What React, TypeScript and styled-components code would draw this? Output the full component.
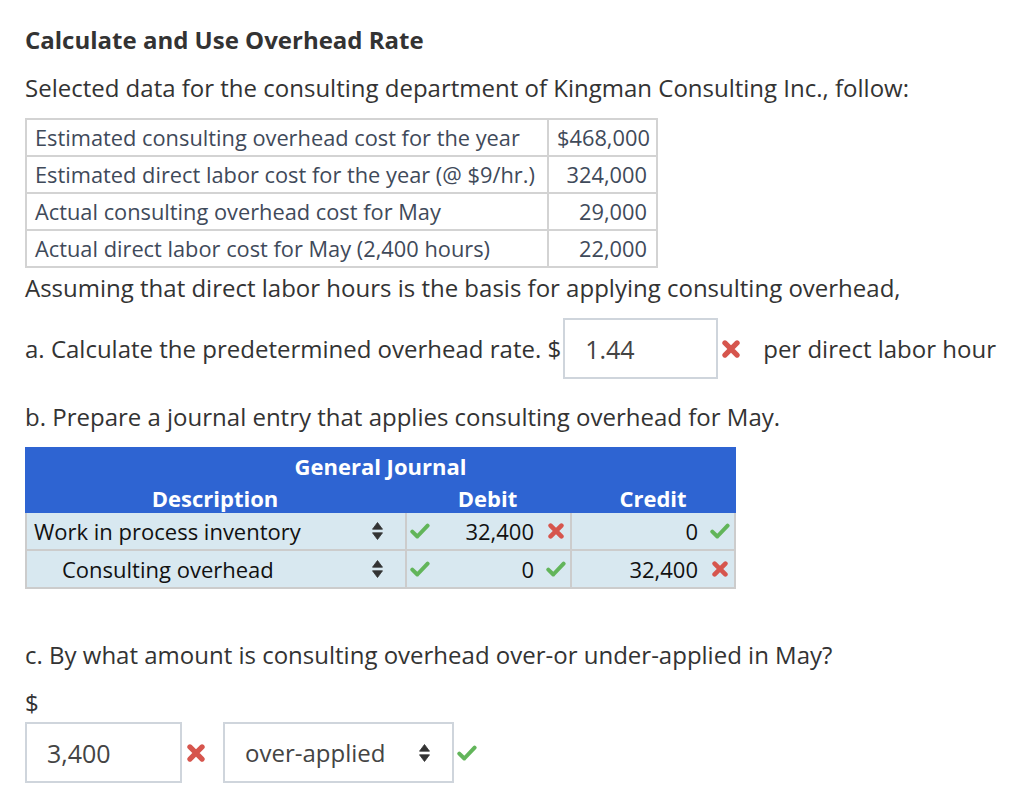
import React from 'react';
import styled, { createGlobalStyle } from 'styled-components';

const GlobalStyle = createGlobalStyle`
  body {
    margin: 0;
    background: #ffffff;
    font-family: "Open Sans", "Noto Sans", sans-serif;
    color: #333333;
  }
`;

const Page = styled.div`
  padding: 24px 0 40px 25px;
  width: 1000px;
`;

const Title = styled.h2`
  margin: 0;
  font-size: 24px;
  line-height: 32px;
  font-weight: 700;
  color: #333;
`;

const Para = styled.p<{ $top: number }>`
  margin: ${p => p.$top}px 0 0;
  font-size: 24px;
  line-height: 32px;
  color: #333;
`;

const DataTable = styled.table`
  margin-top: 14px;
  border-collapse: collapse;
  table-layout: fixed;
  width: 631px;
  font-size: 21.8px;
  color: #3f4a5a;

  td {
    border: 2px solid #d3d3d3;
    height: 35px;
    line-height: 35px;
    padding: 0 4px 0 8px;
    white-space: nowrap;
  }

  td:last-child {
    padding-right: 9px;
    text-align: right;
  }
`;

const AnswerRow = styled.div<{ $top: number }>`
  display: flex;
  align-items: center;
  margin-top: ${p => p.$top}px;
  font-size: 24px;
  color: #333;
`;

const InputBox = styled.div<{ $width: number; $size: number }>`
  box-sizing: border-box;
  width: ${p => p.$width}px;
  height: 61px;
  border: 2px solid #cfd5dc;
  display: flex;
  align-items: center;
  padding: 0 22px 0 20px;
  font-size: ${p => p.$size}px;
  color: #444;
`;

const SelectText = styled.span`
  flex: 1;
`;

const Mark = styled.span<{ $gap: number }>`
  display: inline-flex;
  align-items: center;
  margin-left: ${p => p.$gap}px;
`;

const Journal = styled.div`
  margin-top: 14px;
  width: 711px;
`;

const JournalHead = styled.div`
  background: #2e64d2;
  color: #ffffff;
  font-weight: 700;
  font-size: 22px;
`;

const HeadTitle = styled.div`
  height: 36px;
  line-height: 38px;
  text-align: center;
`;

const HeadCols = styled.div`
  display: grid;
  grid-template-columns: 380px 165px 166px;
  height: 30px;
  line-height: 30px;
  text-align: center;
`;

const JournalRow = styled.div`
  display: grid;
  grid-template-columns: 380px 165px 166px;
  height: 38px;
  box-sizing: border-box;
  border-bottom: 2px solid #cccccc;
  background: #d8e8f0;
  font-size: 22px;
  color: #111;
`;

const DescCell = styled.div<{ $indent: boolean }>`
  display: flex;
  align-items: center;
  border-left: 2px solid #cccccc;
  padding: 0 22px 0 ${p => (p.$indent ? 35 : 7)}px;
`;

const AmountCell = styled.div<{ $last?: boolean }>`
  display: flex;
  align-items: center;
  border-left: 2px solid #cccccc;
  border-right: ${p => (p.$last ? '2px solid #cccccc' : 'none')};
  padding: 0 4px 0 3px;
`;

const Amount = styled.span`
  flex: 1;
  text-align: right;
`;

const IconSlot = styled.span`
  width: 20px;
  margin-left: 12px;
  display: inline-flex;
  justify-content: center;
`;

const Check = () => (
  <svg width="20" height="16" viewBox="0 0 20 16">
    <path d="M2.3 8.6 L7.3 13.5 L17.6 2.6" fill="none" stroke="#62b55a" strokeWidth="4" strokeLinecap="round" strokeLinejoin="round" />
  </svg>
);

const Cross = ({ size = 16 }: { size?: number }) => (
  <svg width={size} height={size} viewBox="0 0 16 16">
    <path d="M2.6 2.6 L13.4 13.4 M13.4 2.6 L2.6 13.4" fill="none" stroke="#d6554d" strokeWidth="4.6" strokeLinecap="round" />
  </svg>
);

const Sort = () => (
  <svg width="11" height="18" viewBox="0 0 11 18">
    <path d="M5.5 0.5 L10.5 7.2 L0.5 7.2 Z M5.5 17.5 L10.5 10.8 L0.5 10.8 Z" fill="#333" strokeLinejoin="round" stroke="#333" strokeWidth="0.8" />
  </svg>
);

const dataRows = [
  ['Estimated consulting overhead cost for the year', '$468,000'],
  ['Estimated direct labor cost for the year (@ $9/hr.)', '324,000'],
  ['Actual consulting overhead cost for May', '29,000'],
  ['Actual direct labor cost for May (2,400 hours)', '22,000'],
];

type Entry = {
  account: string;
  indent: boolean;
  debit: string;
  debitOk: boolean;
  credit: string;
  creditOk: boolean;
};

const entries: Entry[] = [
  { account: 'Work in process inventory', indent: false, debit: '32,400', debitOk: false, credit: '0', creditOk: true },
  { account: 'Consulting overhead', indent: true, debit: '0', debitOk: true, credit: '32,400', creditOk: false },
];

export default function App() {
  return (
    <Page>
      <GlobalStyle />
      <Title>Calculate and Use Overhead Rate</Title>
      <Para $top={16}>Selected data for the consulting department of Kingman Consulting Inc., follow:</Para>

      <DataTable>
        <colgroup>
          <col style={{ width: 522 }} />
          <col style={{ width: 109 }} />
        </colgroup>
        <tbody>
          {dataRows.map(([label, value]) => (
            <tr key={label}>
              <td>{label}</td>
              <td>{value}</td>
            </tr>
          ))}
        </tbody>
      </DataTable>

      <Para $top={4}>Assuming that direct labor hours is the basis for applying consulting overhead,</Para>

      <AnswerRow $top={14}>
        <span>a. Calculate the predetermined overhead rate. $</span>
        <InputBox $width={155} $size={25} style={{ marginLeft: 2 }}>1.44</InputBox>
        <Mark $gap={4}><Cross size={18} /></Mark>
        <Mark $gap={23}>per direct labor hour</Mark>
      </AnswerRow>

      <Para $top={22}>b. Prepare a journal entry that applies consulting overhead for May.</Para>

      <Journal>
        <JournalHead>
          <HeadTitle>General Journal</HeadTitle>
          <HeadCols>
            <span>Description</span>
            <span>Debit</span>
            <span>Credit</span>
          </HeadCols>
        </JournalHead>
        {entries.map(e => (
          <JournalRow key={e.account}>
            <DescCell $indent={e.indent}>
              <SelectText>{e.account}</SelectText>
              <Sort />
            </DescCell>
            <AmountCell>
              <Check />
              <Amount>{e.debit}</Amount>
              <IconSlot>{e.debitOk ? <Check /> : <Cross />}</IconSlot>
            </AmountCell>
            <AmountCell $last>
              <Amount>{e.credit}</Amount>
              <IconSlot>{e.creditOk ? <Check /> : <Cross />}</IconSlot>
            </AmountCell>
          </JournalRow>
        ))}
      </Journal>

      <Para $top={50}>c. By what amount is consulting overhead over-or under-applied in May?</Para>
      <Para $top={16}>$</Para>

      <AnswerRow $top={3}>
        <InputBox $width={157} $size={25}>3,400</InputBox>
        <Mark $gap={5}><Cross size={18} /></Mark>
        <InputBox $width={231} $size={24} style={{ marginLeft: 18 }}>
          <SelectText>over-applied</SelectText>
          <Sort />
        </InputBox>
        <Mark $gap={3}><Check /></Mark>
      </AnswerRow>
    </Page>
  );
}
